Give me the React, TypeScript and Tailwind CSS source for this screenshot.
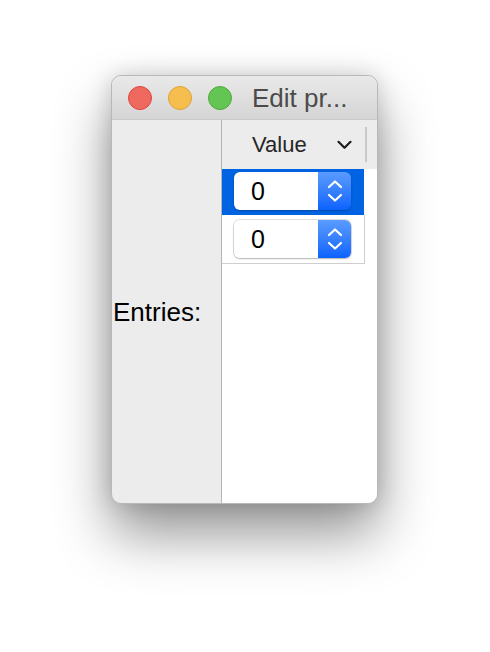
import React from "react";

function Stepper({ selected }: { selected: boolean }) {
  return (
    <div
      className={
        "flex h-[38px] w-[117px] rounded-[6px] " +
        (selected
          ? "shadow-[0_1px_2px_rgba(0,0,0,0.25)]"
          : "shadow-[0_0_0_1px_rgba(0,0,0,0.12),0_1px_2px_rgba(0,0,0,0.2)]")
      }
    >
      <div className="flex w-[84px] items-center rounded-l-[6px] bg-white pl-[17px] text-[25px] leading-none text-black">
        0
      </div>
      <div className="flex w-[33px] items-center justify-center rounded-r-[6px] bg-gradient-to-b from-[#5a9bff] to-[#0a62ff]">
        <svg width="16" height="26" viewBox="0 0 16 26" fill="none">
          <path d="M2 9 L8 3.5 L14 9" stroke="white" strokeWidth="2.2" strokeLinecap="round" strokeLinejoin="round" />
          <path d="M2 17 L8 22.5 L14 17" stroke="white" strokeWidth="2.2" strokeLinecap="round" strokeLinejoin="round" />
        </svg>
      </div>
    </div>
  );
}

export default function App() {
  return (
    <div
      className="h-[652px] w-[490px] bg-white pl-[111px] pt-[75px]"
      style={{ fontFamily: '"Liberation Sans", Arial, sans-serif' }}
    >
      <div className="flex h-[429px] w-[267px] flex-col overflow-hidden rounded-[10px] border border-[#b8b8b8] bg-[#ececec] shadow-[0_30px_55px_rgba(0,0,0,0.42),0_0_22px_rgba(0,0,0,0.16)]">
        {/* Title bar */}
        <div className="flex h-[44px] shrink-0 items-center border-b border-[#c9c9c9] bg-gradient-to-b from-[#e9e9e9] to-[#d5d5d5] pl-[16px]">
          <div className="flex gap-[16px]">
            <div className="h-[24px] w-[24px] rounded-full border border-[#e0443e] bg-[#ee695e]" />
            <div className="h-[24px] w-[24px] rounded-full border border-[#dea236] bg-[#f5be4f]" />
            <div className="h-[24px] w-[24px] rounded-full border border-[#53a83a] bg-[#62c554]" />
          </div>
          <div className="ml-[20px] whitespace-nowrap text-[26px] leading-none text-[#4b4b4b]">
            Edit pr...
          </div>
        </div>
        {/* Body */}
        <div className="flex flex-1">
          <div className="flex w-[109px] shrink-0 items-center pl-[1px]">
            <span className="whitespace-nowrap text-[26px] leading-none text-black">Entries:</span>
          </div>
          <div className="flex flex-1 flex-col border-l border-[#b5b5b5] bg-white">
            <div className="flex h-[49px] shrink-0 items-center bg-[#ececec]">
              <div className="flex w-[143px] items-center">
                <span className="ml-[30px] text-[22px] leading-none text-[#262626]">Value</span>
                <svg className="ml-[30px]" width="15" height="10" viewBox="0 0 15 10" fill="none">
                  <path d="M1.5 1.8 L7.5 7.8 L13.5 1.8" stroke="#1e1e1e" strokeWidth="2.2" strokeLinecap="round" strokeLinejoin="round" />
                </svg>
              </div>
              <div className="h-[35px] w-[2px] bg-[#c8c8c8]" />
            </div>
            <div className="flex h-[46px] w-[142px] shrink-0 items-start bg-[#0063e1] pl-[12px] pt-[3px]">
              <Stepper selected />
            </div>
            <div className="flex h-[49px] w-[143px] shrink-0 items-start border-b border-r border-[#cfcfcf] pl-[12px] pt-[5px]">
              <Stepper selected={false} />
            </div>
          </div>
        </div>
      </div>
    </div>
  );
}
